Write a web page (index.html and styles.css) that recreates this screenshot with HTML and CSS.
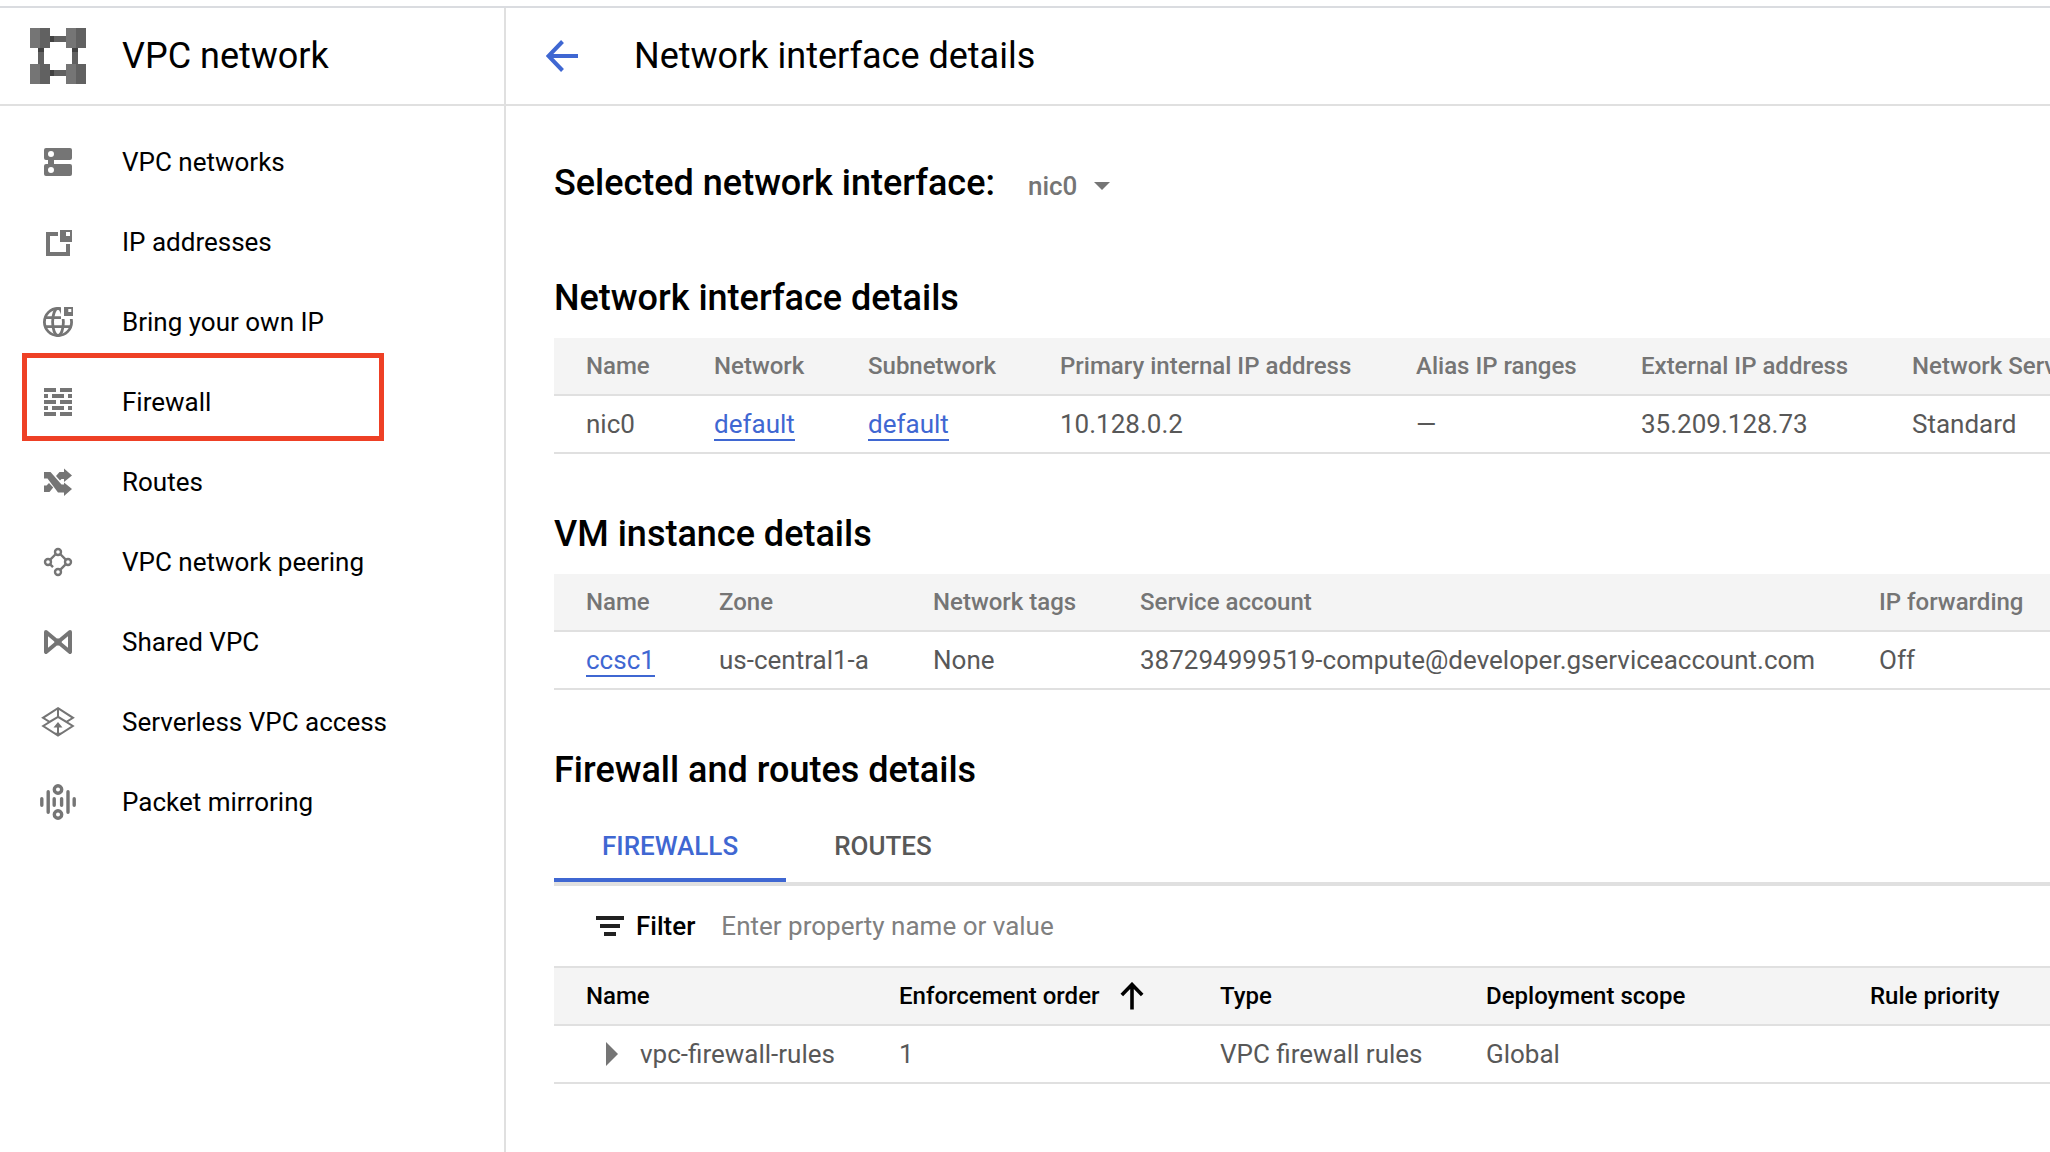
FILE: index.html
```html
<!DOCTYPE html>
<html lang="en">
<head>
<meta charset="utf-8">
<title>VPC network</title>
<link rel="stylesheet" href="styles.css">
</head>
<body>
<div class="app">
  <aside class="sidebar">
    <div class="bar product">
      <svg class="logo" viewBox="0 0 56 56">
        <path fill="#757575" d="M0 0h10v20H0zM36 0h10v20H36zM0 36h10v20H0zM36 36h10v20H36z"/>
        <path fill="#616161" d="M10 0h10v20H10zM46 0h10v20H46zM10 36h10v20H10zM46 36h10v20H46zM24 8h12v6H24zM24 42h12v6H24zM8 24h6v12H8zM42 24h6v12h-6z"/>
        <path fill="#424242" d="M20 8h4v6h-4zM20 42h4v6h-4zM8 20h6v4H8zM42 20h6v4h-6z"/>
      </svg>
      <span>VPC network</span>
    </div>
    <nav class="nav">
      <a class="nav-item"><svg class="icon" viewBox="0 0 36 36"><path fill-rule="evenodd" d="M6 4h24a2 2 0 0 1 2 2v8a2 2 0 0 1-2 2H14v4h16a2 2 0 0 1 2 2v8a2 2 0 0 1-2 2H6a2 2 0 0 1-2-2v-8a2 2 0 0 1 2-2h2v-4H6a2 2 0 0 1-2-2V6a2 2 0 0 1 2-2zM11 7a3 3 0 1 0 0 6 3 3 0 0 0 0-6zM11 23a3 3 0 1 0 0 6 3 3 0 0 0 0-6z"/></svg>VPC networks</a>
      <a class="nav-item"><svg class="icon" viewBox="0 0 36 36"><path fill-rule="evenodd" d="M6 8h12v4h-8v16h16v-8h4v12H6zM20 6h12v12H20zM26 8v4h4V8z"/></svg>IP addresses</a>
      <a class="nav-item"><svg class="icon" viewBox="0 0 36 36"><clipPath id="globe-cut"><path d="M0 0h21v15h15v21H0z"/></clipPath><g class="line" clip-path="url(#globe-cut)" stroke-width="2.8"><circle cx="18" cy="18" r="13.6"/><ellipse cx="18" cy="18" rx="5.4" ry="13.6"/><path d="M5 13.7h16M5 22.6h26"/></g><path fill-rule="evenodd" d="M24 3h9v9h-9zM28.300 5v3h3v-3z"/></svg>Bring your own IP</a>
      <a class="nav-item"><svg class="icon" viewBox="0 0 36 36"><path d="M4 4h12v4H4zM20 4h12v4H20zM4 10h4v4H4zM12 10h12v4H12zM28 10h4v4h-4zM4 16h12v4H4zM20 16h12v4H20zM4 22h4v4H4zM12 22h12v4H12zM28 22h4v4h-4zM4 28h12v4H4zM20 28h12v4H20z"/></svg>Firewall</a>
      <a class="nav-item"><svg class="icon" viewBox="0 0 36 36"><path d="M4 8h6.5L21.5 20.5H24V18.500l8 6.500-8 7v-3.500h-6L7.500 14.500H4zM16 12l3.500-4H24V4.500l8 7-8 6.500V15h-2.500L20 16.500zM4 21.500h2.500L9 19l4.200 4.500L9.500 28H4z"/></svg>Routes</a>
      <a class="nav-item"><svg class="icon" viewBox="0 0 36 36"><g class="line" stroke-width="2.400"><circle cx="18" cy="8" r="3"/><circle cx="8" cy="18" r="3"/><circle cx="28" cy="18" r="3"/><circle cx="18" cy="28" r="3"/><path d="M10 15.800l5.800-5.800M20.200 10l5.800 5.800M25.800 20.200l-5.600 5.600M10 20.200l3 3"/></g></svg>VPC network peering</a>
      <a class="nav-item"><svg class="icon" viewBox="0 0 36 36"><path class="line" stroke-width="4" stroke-linejoin="round" d="M6 8l24 20V8L6 28z"/><path d="M18 14l4 4-4 4-4-4z"/></svg>Shared VPC</a>
      <a class="nav-item"><svg class="icon" viewBox="0 0 36 36"><g class="line" stroke-width="2"><path d="M18 4.200l15 9.600-6.500 4L18 12.800l-8.500 5L3 13.800zM18 4v9M18 12.800L3.200 22 18 31.500 32.800 22z"/><path d="M18 31v-9"/></g><path d="M13.500 23.500L18 18l4.500 5.500zM14.500 28.800h7L18 32z"/></svg>Serverless VPC access</a>
      <a class="nav-item"><svg class="icon" viewBox="0 0 36 36"><g class="line" stroke-width="3.400" stroke-linecap="round"><path d="M1.800 14.700v6.600M8.200 7.700v20.600M14.200 14.700v6.600M21.600 14.700v6.600M28 7.700v20.600M34.200 14.700v6.600"/><circle cx="18" cy="5.500" r="3.700"/><circle cx="18" cy="30.500" r="3.700"/></g></svg>Packet mirroring</a>
      <div class="highlight"></div>
    </nav>
  </aside>
  <main class="main">
    <header class="bar page-bar">
      <svg class="back" viewBox="0 0 32 32"><path d="M32 16H3M16.500 1.500L2.500 16l14 14.500"/></svg>
      <span>Network interface details</span>
    </header>
    <div class="content">
      <div class="selector">
        <h2>Selected network interface:</h2>
        <span class="selected">nic0<i class="caret"></i></span>
      </div>

      <h2>Network interface details</h2>
      <div class="table nic">
        <div class="row head"><span>Name</span><span>Network</span><span>Subnetwork</span><span>Primary internal IP address</span><span>Alias IP ranges</span><span>External IP address</span><span>Network Service Tier</span></div>
        <div class="row"><span>nic0</span><span><a class="link">default</a></span><span><a class="link">default</a></span><span>10.128.0.2</span><span>—</span><span>35.209.128.73</span><span>Standard</span></div>
      </div>

      <h2>VM instance details</h2>
      <div class="table vm">
        <div class="row head"><span>Name</span><span>Zone</span><span>Network tags</span><span>Service account</span><span>IP forwarding</span></div>
        <div class="row"><span><a class="link">ccsc1</a></span><span>us-central1-a</span><span>None</span><span>387294999519-compute@developer.gserviceaccount.com</span><span>Off</span></div>
      </div>

      <h2>Firewall and routes details</h2>
      <div class="tabs"><a class="tab active">FIREWALLS</a><a class="tab">ROUTES</a></div>
      <div class="filter">
        <svg class="filter-icon" viewBox="0 0 28 20"><path d="M0 0h28v4H0zM4 8h20v4H4zM8 16h12v4H8z"/></svg>
        <b>Filter</b>
        <span class="placeholder">Enter property name or value</span>
      </div>
      <div class="table rules">
        <div class="row head"><span>Name</span><span class="sorted">Enforcement order<svg class="sort" viewBox="0 0 24 28"><path d="M12 27.500V3M1.800 13L12 2.500 22.200 13"/></svg></span><span>Type</span><span>Deployment scope</span><span>Rule priority</span></div>
        <div class="row"><span class="group"><i class="expand"></i>vpc-firewall-rules</span><span>1</span><span>VPC firewall rules</span><span>Global</span><span></span></div>
      </div>
    </div>
  </main>
</div>
</body>
</html>
```
FILE: styles.css
```css
* { box-sizing: border-box; }

body {
  margin: 0;
  background: #fff;
  color: #000;
  font-family: Roboto, "Liberation Sans", sans-serif;
  font-size: 26px;
  overflow: hidden;
}

.app {
  display: flex;
  height: 1146px;
  margin-top: 6px;
  border-top: 2px solid #dadce0;
}

.sidebar {
  width: 506px;
  flex: none;
  border-right: 2px solid #e0e0e0;
}

.main {
  flex: 1;
  min-width: 0;
  overflow: hidden;
}

.bar {
  display: flex;
  align-items: center;
  height: 98px;
  border-bottom: 2px solid #e0e0e0;
  font-size: 36px;
}

.product { padding-left: 30px; gap: 36px; }
.logo { width: 56px; height: 56px; }

.page-bar { padding-left: 40px; gap: 56px; }
.back {
  width: 32px;
  height: 32px;
  fill: none;
  stroke: #3f67d2;
  stroke-width: 4;
}

.nav {
  position: relative;
  padding-top: 16px;
}

.nav-item {
  display: flex;
  align-items: center;
  gap: 46px;
  height: 80px;
  padding-left: 40px;
}

.icon {
  width: 36px;
  height: 36px;
  fill: #757575;
}

.line { fill: none; stroke: #757575; }

/* Callout frame laid over the Firewall entry */
.highlight {
  position: absolute;
  left: 22px;
  top: 247px;
  width: 362px;
  height: 88px;
  border: 5px solid #ee4025;
}

.content { padding: 50px 0 0 48px; }

h2 {
  margin: 0;
  height: 54px;
  line-height: 54px;
  font-size: 36px;
  font-weight: 500;
  white-space: nowrap;
}

.selector {
  display: flex;
  gap: 33px;
  margin-bottom: 55px;
}

.selected {
  display: flex;
  align-items: center;
  gap: 17px;
  height: 60px;
  color: #757575;
  font-weight: 500;
}

.caret {
  border: 8px solid transparent;
  border-top-color: #757575;
  border-bottom: 0;
}

.table {
  margin: 13px 0 53px;
  color: #585858;
}

.row {
  display: grid;
  align-items: center;
  height: 58px;
  padding-left: 32px;
  border-bottom: 2px solid #e0e0e0;
  white-space: nowrap;
}

.head {
  background: #f4f4f4;
  color: #757575;
  font-size: 24px;
  font-weight: 500;
}

.nic .row { grid-template-columns: 128px 154px 192px 356px 225px 271px 1fr; }
.vm .row { grid-template-columns: 133px 214px 207px 739px 1fr; }
.rules .row { grid-template-columns: 313px 321px 266px 384px 1fr; }

.link {
  display: inline-block;
  padding-top: 3px;
  line-height: 29px;
  border-bottom: 2px solid #3f67d2;
  color: #3f67d2;
}

.tabs {
  display: flex;
  height: 74px;
  margin-top: 15px;
  border-bottom: 4px solid #e0e0e0;
}

.tab {
  height: 70px;
  padding: 0 48px;
  line-height: 68px;
  color: #585858;
  font-weight: 500;
}

.active {
  border-bottom: 4px solid #3f67d2;
  color: #3f67d2;
}

.filter {
  display: flex;
  align-items: center;
  height: 80px;
  padding-left: 42px;
}

.filter-icon { width: 28px; height: 20px; fill: #212121; }
.filter b { margin-left: 12px; font-weight: 500; }
.placeholder { margin-left: 26px; color: #808080; }

.rules { margin: 0; border-top: 2px solid #e0e0e0; }
.rules .head { color: #000; }

.sorted { display: flex; align-items: center; }
.sort {
  width: 24px;
  height: 28px;
  margin-left: 21px;
  fill: none;
  stroke: #000;
  stroke-width: 3.6;
}

.group { display: flex; align-items: center; padding-left: 20px; }
.expand {
  margin-right: 22px;
  border: 12px solid transparent;
  border-left-color: #757575;
  border-right: 0;
}
```
